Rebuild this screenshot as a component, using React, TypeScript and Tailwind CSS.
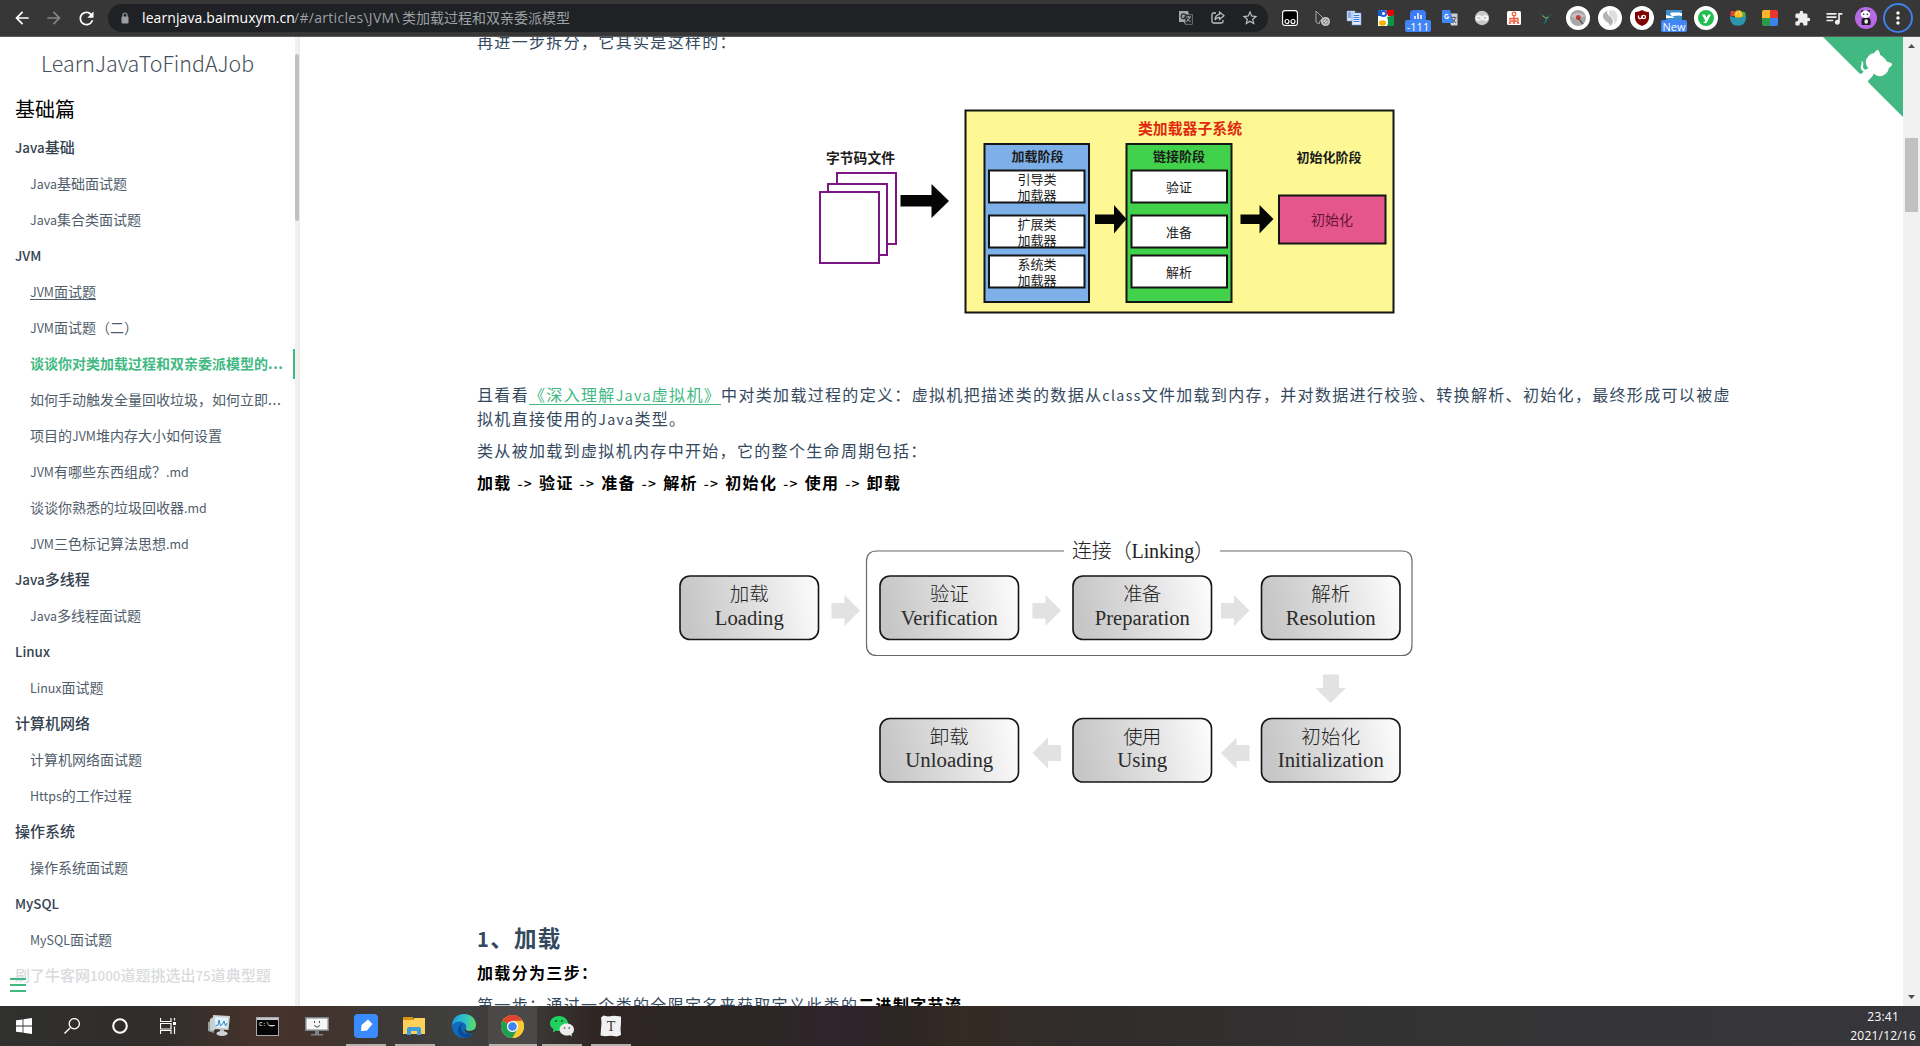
import React from "react";
import { MdArrowBack, MdArrowForward, MdRefresh, MdStarBorder, MdExtension, MdQueueMusic, MdMoreVert } from "react-icons/md";

const CJK = "font-['Noto_Sans_CJK_SC',sans-serif]";

/** Splits a string so that Latin runs are set a little smaller than the Chinese ones. */
function T({ children }: { children: string }) {
  const parts = children.split(/([A-Za-z0-9.:>\-]+)/);
  return (
    <>
      {parts.map((p, i) =>
        i % 2 ? (
          <span key={i} className={p === "..." ? "leading-none tracking-[0.6px]" : "text-[0.89em] leading-none"}>
            {p}
          </span>
        ) : (
          p
        )
      )}
    </>
  );
}

const Slot = ({ children }: { children: React.ReactNode }) => (
  <div className="relative flex h-9 w-8 shrink-0 items-center justify-center">{children}</div>
);

const Svg = ({ s = 16, vb = 16, children }: { s?: number; vb?: number; children: React.ReactNode }) => (
  <svg width={s} height={s} viewBox={`0 0 ${vb} ${vb}`} className="block">
    {children}
  </svg>
);

const Badge = ({ children }: { children: string }) => (
  <span className="absolute left-1/2 top-5 flex h-3 w-[26px] -translate-x-1/2 items-center justify-center rounded-[2px] bg-[#4285f4] font-['Open_Sans',sans-serif] text-[11px] leading-none text-white">
    {children}
  </span>
);

function Toolbar() {
  return (
    <header className="flex h-[37px] items-center border-b border-[#5b5b5b] bg-[#373737]">
      <div className="flex w-[108px] items-center pl-[6px] text-[20px] text-white">
        <Slot>
          <MdArrowBack />
        </Slot>
        <Slot>
          <MdArrowForward className="text-[#868686]" />
        </Slot>
        <Slot>
          <MdRefresh className="text-[21px]" />
        </Slot>
      </div>
      <div className="flex h-7 w-[1160px] items-center rounded-full bg-[#202124] pl-[12px]">
        <svg width="8" height="12" viewBox="0 0 8 12" className="mr-[13px] ml-[1px]">
          <rect x="0.5" y="4.5" width="7" height="7" rx="1" fill="#9aa0a6" />
          <path d="M2 5V3a2 2 0 0 1 4 0v2" fill="none" stroke="#9aa0a6" strokeWidth="1.2" />
        </svg>
        <div className="flex items-center whitespace-nowrap font-['Open_Sans','Noto_Sans_CJK_SC',sans-serif] text-[14px] leading-none text-[#9aa0a6]">
          <span className="w-[152px] tracking-[0.1px] text-white">learnjava.baimuxym.cn</span>
          <span className="w-[108px] tracking-[0.3px]">/#/articles\JVM\</span>
          <span>类加载过程和双亲委派模型</span>
        </div>
        <div className="ml-auto flex pr-[2px] text-[#bdc1c6]">
          <Slot>
            <Svg>
              <path d="M1 1h9l1 3h3.5v10.500H7L6 12H1z" fill="#a5a7a9" />
              <path d="M7 4.500h7v9.500H7.500" fill="#2a2b2e" />
              <path d="M8 7h5M10.500 6v1M12 7q-1 3-3.500 4.500M9 8.500q1 2 3.500 3" stroke="#a5a7a9" fill="none" />
              <path d="M7.300 4.800A2.400 2.400 0 1 0 7.800 7H5.500" stroke="#25262a" fill="none" strokeWidth="1.200" />
            </Svg>
          </Slot>
          <Slot>
            <Svg>
              <path d="M6 3H3.500Q2 3 2 4.500v7Q2 13 3.500 13h8Q13 13 13 11.500V10" fill="none" stroke="#bdc1c6" strokeWidth="1.300" />
              <path d="M9.500 2l4.500 3.800L9.500 9.500V7.300Q6.500 7.300 5 10q.3-5 4.500-5.600z" fill="none" stroke="#bdc1c6" strokeWidth="1.200" />
            </Svg>
          </Slot>
          <Slot>
            <MdStarBorder className="text-[18px]" />
          </Slot>
        </div>
      </div>
      <div className="ml-[6px] flex">
        <Slot>
          <Svg>
            <rect x="0.6" y="0.6" width="14.800" height="14.800" rx="2.500" fill="#000" stroke="#fff" strokeWidth="1.100" />
            <circle cx="5" cy="11.500" r="2" fill="none" stroke="#fff" strokeWidth="1.200" />
            <circle cx="11" cy="11.500" r="2" fill="none" stroke="#fff" strokeWidth="1.200" />
          </Svg>
        </Slot>
        <Slot>
          <Svg>
            <path d="M2 1l9 9H6.500L5 14 2 12z" fill="none" stroke="#aaa" />
            <circle cx="11.500" cy="11.500" r="4.500" fill="#c9c9c9" />
            <circle cx="11.500" cy="11.500" r="2.500" fill="none" stroke="#888" />
            <path d="M10 13l3-3" stroke="#888" />
          </Svg>
        </Slot>
        <Slot>
          <Svg>
            <path d="M1 1h8v10H1z" fill="#d7e4fb" stroke="#7ea6e8" strokeWidth=".5" />
            <path d="M6 3h9v12H6z" fill="#e4edfd" stroke="#6f98e0" strokeWidth=".6" />
            <path d="M2 3h3M2 5h3M2 7h3M7.500 5.500h6M7.500 7.500h6M7.500 9.500h6M7.500 11.500h6" stroke="#3f7be0" />
          </Svg>
        </Slot>
        <Slot>
          <Svg>
            <rect width="16" height="16" fill="#fff" />
            <path d="M0 0h3v6H0z" fill="#1c5ed6" />
            <path d="M8 0h8v6H10z" fill="#ee0000" />
            <path d="M9 7l7-2v11H9q2-4 0-9z" fill="#0b9444" />
            <circle cx="5.500" cy="3.500" r="2.600" fill="#fff" stroke="#1c5ed6" strokeWidth="2" />
            <ellipse cx="4.500" cy="13" rx="3.600" ry="2.700" fill="#f4b400" />
          </Svg>
        </Slot>
        <Slot>
          <Svg>
            <rect width="16" height="16" rx="4" fill="#3d7bfd" />
            <path d="M5 9V6M8 9V3M11 9V5" stroke="#fff" strokeWidth="1.500" />
          </Svg>
          <Badge>-111</Badge>
        </Slot>
        <Slot>
          <Svg>
            <path d="M6 3.500h9.500V15.500H9z" fill="#cfcfcf" />
            <path d="M0 0h8l4 13H0z" fill="#4285f4" />
            <path d="M6.300 5A2 2 0 1 0 6.800 7H5" fill="none" stroke="#fff" strokeWidth="1.100" />
            <path d="M9.500 7.500h5M12 6.500v1M13.500 7.500q-.5 3-3 5M10.500 9l3.500 4" fill="none" stroke="#5f6368" />
          </Svg>
        </Slot>
        <Slot>
          <Svg>
            <circle cx="8" cy="8" r="7.200" fill="#c8c8c8" />
            <path d="M8 8Q6 5.500 4.500 6a2 2 0 0 0 0 4Q6 10.500 8 8t3.500-2a2 2 0 0 1 0 4Q10 10.500 8 8" fill="none" stroke="#fff" strokeWidth="1.300" />
          </Svg>
        </Slot>
        <Slot>
          <Svg>
            <rect x="1" y="1" width="14" height="14" rx="1.500" fill="#fff" />
            <circle cx="8" cy="4" r="1.800" fill="none" stroke="#f15a3a" strokeWidth="1.200" />
            <path d="M8 5.500V13M4 13V8.500h8V13M2.800 13h2.400M6.800 13h2.400M10.800 13h2.400M5 11h6" stroke="#f15a3a" strokeWidth="1.300" fill="none" />
          </Svg>
        </Slot>
        <Slot>
          <Svg>
            <path d="M1.500 3.500q4 .5 6.500 4.500L14 4q-3 3-4.800 5.500-.7 3.500-4.200 5 2.500-2.500 2.300-5.500Q5.500 5.500 1.500 3.500z" fill="#17777c" />
            <path d="M4.500 6q2 .5 3.300 2.300L10 7" stroke="#a2a838" fill="none" />
          </Svg>
        </Slot>
        <Slot>
          <Svg s={24} vb={24}>
            <circle cx="12" cy="12" r="12" fill="#fff" />
            <circle cx="12" cy="12" r="8" fill="#a7a7a7" />
            <path d="M4.500 10q8-6 15 0l-7 2 5 5" fill="#c2c2c2" />
            <circle cx="12.300" cy="11.500" r="2.500" fill="#cb3d3d" />
            <path d="M12 12l5 6" stroke="#555" strokeWidth="1.300" />
          </Svg>
        </Slot>
        <Slot>
          <Svg s={24} vb={24}>
            <circle cx="12" cy="12" r="12" fill="#fff" />
            <path d="M9.500 4.500Q3 7.500 5.500 12.500q1.500 2.500 5 4.500 2 1.500 1 3 4-2 3.300-5.500-.5-2.500-3.300-4.500-3.500-2.500-2-5.500z" fill="#b3b3b3" />
            <path d="M11 5q1.500-1.500 5-.5 3.500 2 3.500 7-.5 5-4 7.500 1.500-4.500-1.500-7.500Q10 8.500 11 5z" fill="#dedede" />
          </Svg>
        </Slot>
        <Slot>
          <Svg s={24} vb={24}>
            <circle cx="12" cy="12" r="12" fill="#fff" />
            <path d="M12 4q3 2 7 2.300V12q0 5-7 8-7-3-7-8V6.300Q9 6 12 4z" fill="#800000" />
            <path d="M8.500 9.500V11a1.700 1.700 0 0 0 3.400 0V9.500" fill="none" stroke="#fff" strokeWidth="1.300" />
            <circle cx="13.800" cy="11" r="1.700" fill="none" stroke="#fff" strokeWidth="1.300" />
          </Svg>
        </Slot>
        <Slot>
          <Svg>
            <rect width="16" height="16" fill="#fff" />
            <path d="M0 0h16v3H9Q7 4 9 5l7 1v5H0V8h7q2-.5 0-1.500L0 5z" fill="#3d8fd0" />
            <path d="M5 2.500h9v1.300H9q-1 .7 0 1.200l4 1H6Q3 4 5 2.500z" fill="#fff" />
          </Svg>
          <Badge>New</Badge>
        </Slot>
        <Slot>
          <Svg s={24} vb={24}>
            <circle cx="12" cy="12" r="12" fill="#fff" />
            <circle cx="12" cy="12" r="8" fill="#20bf4f" />
            <path d="M8 8.500h3l1.500 3 2-3H17L12.500 17q-2 .5-3.500-.5 2-.5 2.200-2z" fill="#fff" />
          </Svg>
        </Slot>
        <Slot>
          <Svg>
            <path d="M.5 1h4v5h-4z" fill="#e2453c" />
            <path d="M12 1.500l3.500 1V7H12z" fill="#3fb34f" />
            <circle cx="8.500" cy="4.500" r="4.300" fill="#fbbc1a" />
            <path d="M6 3h1M9 2h1M10 5h1" stroke="#fff" />
            <path d="M0 6q8 3 16 0 .5 9.500-8 9.800Q-.5 15.500 0 6z" fill="#2d95ab" />
          </Svg>
        </Slot>
        <Slot>
          <Svg>
            <path d="M2 0h6v8H0V2q0-2 2-2z" fill="#fbb32b" />
            <path d="M8 0h6q2 0 2 2v6H8z" fill="#e9362f" />
            <path d="M0 8h8v8H2q-2 0-2-2z" fill="#2c9a48" />
            <path d="M8 8h8v6q0 2-2 2H8z" fill="#3f81f0" />
          </Svg>
        </Slot>
        <Slot>
          <MdExtension className="text-[17px] text-[#eeeeee]" />
        </Slot>
        <Slot>
          <MdQueueMusic className="text-[20px] text-[#eeeeee]" />
        </Slot>
        <Slot>
          <Svg s={22} vb={22}>
            <circle cx="11" cy="11" r="11" fill="#b66ae6" />
            <circle cx="7.300" cy="4.300" r="1.400" fill="#222" />
            <circle cx="13.500" cy="4.300" r="1.400" fill="#222" />
            <path d="M7 11.500q4-2 8 0 1.300 3 .3 6.500H7q-1.300-3.500 0-6.500z" fill="#1d1d1d" />
            <ellipse cx="10.500" cy="7.300" rx="4.600" ry="3.700" fill="#fff" />
            <circle cx="8.700" cy="7.300" r=".8" fill="#222" />
            <circle cx="12.300" cy="7.300" r=".8" fill="#222" />
            <ellipse cx="11.200" cy="14.500" rx="1.800" ry="2.200" fill="#eee" />
          </Svg>
        </Slot>
        <Slot>
          <span className="flex h-[30px] w-[30px] shrink-0 items-center justify-center rounded-full border-2 border-[#3f7fe8] text-[20px] text-white">
            <MdMoreVert />
          </span>
        </Slot>
      </div>
    </header>
  );
}

type Row = { text: string; kind?: "group" | "active" | "underline" | "faded" };

const ROWS: Row[] = [
  { text: "Java基础", kind: "group" },
  { text: "Java基础面试题" },
  { text: "Java集合类面试题" },
  { text: "JVM", kind: "group" },
  { text: "JVM面试题", kind: "underline" },
  { text: "JVM面试题（二）" },
  { text: "谈谈你对类加载过程和双亲委派模型的...", kind: "active" },
  { text: "如何手动触发全量回收垃圾，如何立即..." },
  { text: "项目的JVM堆内存大小如何设置" },
  { text: "JVM有哪些东西组成？.md" },
  { text: "谈谈你熟悉的垃圾回收器.md" },
  { text: "JVM三色标记算法思想.md" },
  { text: "Java多线程", kind: "group" },
  { text: "Java多线程面试题" },
  { text: "Linux", kind: "group" },
  { text: "Linux面试题" },
  { text: "计算机网络", kind: "group" },
  { text: "计算机网络面试题" },
  { text: "Https的工作过程" },
  { text: "操作系统", kind: "group" },
  { text: "操作系统面试题" },
  { text: "MySQL", kind: "group" },
  { text: "MySQL面试题" },
  { text: "刷了牛客网1000道题挑选出75道典型题", kind: "faded" },
];

function rowClass(kind?: Row["kind"]) {
  switch (kind) {
    case "group":
      return "pl-[15px] text-[15px] font-medium text-[#34424f]";
    case "faded":
      return "pl-[15px] text-[15px] font-medium text-[#d9dbdd]";
    case "active":
      return "pl-[30px] text-[14px] font-bold text-[#42b983]";
    case "underline":
      return "pl-[30px] text-[14px] text-[#505d6b] underline underline-offset-2";
    default:
      return "pl-[30px] text-[14px] text-[#505d6b]";
  }
}

function Sidebar() {
  return (
    <aside className="relative flex w-[300px] shrink-0 border-r border-[#e9e9e9]">
      <div className="w-[295px] overflow-hidden">
        <h1 className="mt-[7px] h-9 text-center text-[24px] font-light leading-9 text-[#46505a]">
          <T>LearnJavaToFindAJob</T>
        </h1>
        <h2 className="mt-[11px] h-9 pl-[15px] text-[20px] leading-9 text-black">基础篇</h2>
        <ul className="mt-[2px]">
          {ROWS.map((r) => (
            <li key={r.text} className="flex h-9 items-center justify-between">
              <span className={`whitespace-nowrap leading-6 ${rowClass(r.kind)}`}>
                <T>{r.text}</T>
              </span>
              {r.kind === "active" && <span className="mt-[2px] h-[30px] w-[2px] bg-[#42b983]" />}
            </li>
          ))}
        </ul>
      </div>
      <div className="w-1 bg-[#f1f1f1] pt-[17px]">
        <div className="h-[167px] rounded-sm bg-[#c1c1c1]" />
      </div>
      <div className="absolute bottom-[14px] left-[10px] flex w-4 flex-col gap-1">
        <span className="h-[2px] bg-[#42b983]" />
        <span className="h-[2px] bg-[#42b983]" />
        <span className="h-[2px] bg-[#42b983]" />
      </div>
    </aside>
  );
}

function Box({ x, y, w, h, fill, stroke = "#151515" }: { x: number; y: number; w: number; h: number; fill: string; stroke?: string }) {
  return <rect x={x} y={y} width={w} height={h} fill={fill} stroke={stroke} strokeWidth="2" />;
}

function Label({ x, y, w, size, children, fill = "#1c1c1c", weight = 400 }: { x: number; y: number; w: number; size: number; children: string; fill?: string; weight?: number }) {
  return (
    <text x={x} y={y + size * 0.37 - 1} textAnchor="middle" textLength={w} lengthAdjust="spacingAndGlyphs" fontSize={size} fontWeight={weight} fill={fill}>
      {children}
    </text>
  );
}

/** Class loader subsystem: loading, linking and initialization phases. */
function LoaderDiagram() {
  const ys = [80.5, 125.5, 165.5];
  const loaders = ["引导类", "扩展类", "系统类"];
  const links = ["验证", "准备", "解析"];
  return (
    <svg width="620" height="240" viewBox="0 0 620 240" className="block tracking-normal">
      <Box x={37} y={83} w={59} h={71} fill="#fff" stroke="#7d1685" />
      <Box x={28} y={94} w={59} h={71} fill="#fff" stroke="#7d1685" />
      <Box x={20} y={102} w={59} h={71} fill="#fff" stroke="#7d1685" />
      <Label x={60.500} y={68.500} w={69} size={14} weight={700}>字节码文件</Label>
      <path d="M100.500 105h31V94l17.500 17-17.500 17v-11.500h-31z" fill="#050505" />
      <Box x={165.500} y={20.500} w={428} h={202} fill="#fdf893" />
      <Label x={390} y={39} w={104} size={15} fill="#e02a10" weight={700}>类加载器子系统</Label>
      <Box x={184.500} y={54} w={104.500} h={158} fill="#7db0e8" />
      <Box x={326.500} y={54} w={105} h={158} fill="#42d14a" />
      <Label x={237.500} y={67} w={52} size={13} weight={700}>加载阶段</Label>
      <Label x={379} y={67} w={52} size={13} weight={700}>链接阶段</Label>
      <Label x={529} y={68.500} w={65} size={13} weight={700}>初始化阶段</Label>
      {ys.map((y, i) => (
        <g key={y}>
          <Box x={189} y={y} w={95.500} h={32} fill="#fff" />
          <Box x={331.500} y={y} w={95.500} h={32} fill="#fff" />
          <Label x={237} y={y + 9.500} w={39} size={13}>{loaders[i]}</Label>
          <Label x={237} y={y + 26} w={39} size={13}>加载器</Label>
          <Label x={379} y={y + 17.500} w={26} size={13}>{links[i]}</Label>
        </g>
      ))}
      <path d="M295 124.500h19v-9.500l12.500 14-12.500 14.500V134h-19z" fill="#050505" />
      <path d="M440.500 124.500h19v-9.500l14 14-14 14.500V134h-19z" fill="#050505" />
      <Box x={479} y={105.500} w={106.500} h={48} fill="#e5568c" />
      <Label x={532} y={130.500} w={42} size={14} fill="#6b1238">初始化</Label>
    </svg>
  );
}

type Stage = { x: number; y: number; zh: string; zw: number; en: string; ew: number };

const STAGES: Stage[] = [
  { x: 20, y: 56, zh: "加载", zw: 39, en: "Loading", ew: 69 },
  { x: 220, y: 56, zh: "验证", zw: 39, en: "Verification", ew: 97 },
  { x: 413, y: 56, zh: "准备", zw: 38, en: "Preparation", ew: 95 },
  { x: 601.5, y: 56, zh: "解析", zw: 39, en: "Resolution", ew: 90 },
  { x: 220, y: 198.5, zh: "卸载", zw: 39, en: "Unloading", ew: 88 },
  { x: 413, y: 198.5, zh: "使用", zw: 38, en: "Using", ew: 50 },
  { x: 601.5, y: 198.5, zh: "初始化", zw: 59, en: "Initialization", ew: 106 },
];

/** Class life cycle, from loading to unloading. */
function LifecycleDiagram() {
  return (
    <svg width="780" height="290" viewBox="0 0 780 290" className="block tracking-normal">
      <defs>
        <linearGradient id="stage" x1="0" y1="0.1" x2="1" y2="0">
          <stop offset="0" stopColor="#c6c6c6" />
          <stop offset="0.5" stopColor="#e0e0e0" />
          <stop offset="1" stopColor="#fefefe" />
        </linearGradient>
      </defs>
      <path d="M404 31H217q-10.500 0-10.500 10.500v83.500q0 10.500 10.500 10.500h525q10 0 10-10.500V41.500Q752 31 742 31H560" fill="none" stroke="#6a6a6a" strokeWidth="1.200" />
      <text x="412" y="37.500" fontSize="20" textLength="142" fill="#222" className="font-['Liberation_Serif','Noto_Sans_CJK_SC',serif] font-light">
        连接（Linking）
      </text>
      {STAGES.map((s) => (
        <g key={s.en}>
          <rect x={s.x} y={s.y} width="138.500" height="63.500" rx="10" fill="url(#stage)" stroke="#161616" strokeWidth="1.600" />
          <text x={s.x + 69.25} y={s.y + 25} fontSize="19.500" textAnchor="middle" textLength={s.zw} fill="#222" className="font-['Noto_Sans_CJK_SC',serif] font-light">
            {s.zh}
          </text>
          <text x={s.x + 69.25} y={s.y + 48.500} fontSize="20" textAnchor="middle" textLength={s.ew} lengthAdjust="spacingAndGlyphs" fill="#2b2b2b" className="font-['Liberation_Serif',serif]">
            {s.en}
          </text>
        </g>
      ))}
      <g fill="#e2e2e2">
        <path d="M171.500 83h13v-8L200 90.500 184.500 106v-7.500h-13z" />
        <path d="M372.500 83h13v-8L401 90.500 385.500 106v-7.500h-13z" />
        <path d="M561 83h13v-8l15.500 15.500L574 106v-7.500h-13z" />
        <path d="M663 154.500h16V168h7L670.500 183 655.500 168h7.500z" />
        <path d="M401 225h-13v-7.500L372.500 233l15.500 15.500V241h13z" />
        <path d="M589.500 225h-13v-7.500L561 233l15.500 15.500V241h13z" />
      </g>
    </svg>
  );
}

function Article() {
  return (
    <main className="relative flex-1 overflow-hidden pl-[177px] text-[16px] leading-6 tracking-[1.33px] text-[#34495e]">
      <p className="-mt-2 h-6">再进一步拆分，它其实是这样的：</p>
      <div className="-mr-40 mt-[37px] ml-[323px]">
        <LoaderDiagram />
      </div>
      <p className="mt-[52px] w-[1270px] whitespace-nowrap">
        且看看
        <a className="text-[#42b983] underline underline-offset-[3px]">
          <T>《深入理解Java虚拟机》</T>
        </a>
        <T>中对类加载过程的定义：虚拟机把描述类的数据从class文件加载到内存，并对数据进行校验、转换解析、初始化，最终形成可以被虚</T>
        <br />
        <T>拟机直接使用的Java类型。</T>
      </p>
      <p className="mt-2">类从被加载到虚拟机内存中开始，它的整个生命周期包括：</p>
      <p className="mt-2 font-bold text-black">
        {["加载", "验证", "准备", "解析", "初始化", "使用", "卸载"].map((s, i) => (
          <React.Fragment key={s}>
            {i > 0 && <span className="inline-block w-[27.400px] text-center text-[14px] font-medium leading-none">-&gt;</span>}
            {s}
          </React.Fragment>
        ))}
      </p>
      <div className="mt-[26px] ml-[183px]">
        <LifecycleDiagram />
      </div>
      <h3 className="mt-[109px] h-9 text-[22.500px] font-bold leading-9">
        <T>1、加载</T>
      </h3>
      <p className="mt-[5px] font-bold text-black">加载分为三步：</p>
      <p className="mt-2 whitespace-nowrap">
        第一步：通过一个类的全限定名来获取定义此类的<b className="text-black">二进制字节流</b>
      </p>
      <svg width="80" height="80" viewBox="0 0 250 250" className="absolute right-0 top-0 text-white">
        <path d="M0,0 L115,115 L130,115 L142,142 L250,250 L250,0 Z" fill="#42b983" />
        <path
          d="M128.3,109.0 C113.8,99.7 119.0,89.6 119.0,89.6 C122.0,82.7 120.5,78.6 120.5,78.6 C119.2,72.0 123.4,76.3 123.4,76.3 C127.3,80.9 125.5,87.3 125.5,87.3 C122.9,97.6 130.6,101.9 134.4,103.2"
          fill="currentColor"
        />
        <path
          d="M115.0,115.0 C114.9,115.1 118.7,116.5 119.8,115.4 L133.7,101.6 C136.9,99.2 139.9,98.4 142.2,98.6 C133.8,88.0 127.5,74.4 143.8,58.0 C148.5,53.4 154.0,51.2 159.7,51.0 C160.3,49.4 163.2,43.6 171.4,40.1 C171.4,40.1 176.1,42.5 178.8,56.2 C183.1,58.6 187.2,61.8 190.9,65.4 C194.5,69.0 197.7,73.2 200.1,77.6 C213.8,80.2 216.3,84.9 216.3,84.9 C212.7,93.1 206.9,96.0 205.4,96.6 C205.1,102.4 203.0,107.8 198.3,112.5 C181.9,128.9 168.3,122.5 157.7,114.1 C157.9,116.9 156.7,120.9 152.7,124.9 L141.0,136.5 C139.8,137.7 141.6,141.9 141.8,141.8 Z"
          fill="currentColor"
        />
      </svg>
    </main>
  );
}

function PageScrollbar() {
  return (
    <div className="flex w-[17px] shrink-0 flex-col items-center bg-[#f1f1f1]">
      <svg width="7" height="4" viewBox="0 0 7 4" className="mt-[7px]">
        <path d="M0 4L3.500 0 7 4z" fill="#505050" />
      </svg>
      <div className="mt-[90px] h-[74px] w-[13px] bg-[#c1c1c1]" />
      <svg width="7" height="4" viewBox="0 0 7 4" className="mt-auto mb-[7px]">
        <path d="M0 0L3.500 4 7 0z" fill="#505050" />
      </svg>
    </div>
  );
}

function Task({ children, open, focus }: { children: React.ReactNode; open?: boolean; focus?: boolean }) {
  return (
    <div className={`relative flex h-10 w-[49px] items-center justify-center ${focus ? "bg-[#4b4948]" : ""}`}>
      {children}
      {open && <span className={`absolute bottom-0 h-[2px] bg-[#b5aeab] ${focus ? "w-[48px]" : "w-10"}`} />}
    </div>
  );
}

function Taskbar() {
  return (
    <footer className="flex h-10 shrink-0 items-center bg-[linear-gradient(90deg,#30302e_0%,#302d2b_8%,#46332b_13.5%,#42332d_17%,#3d3a38_20%,#40403e_24%,#3a3736_28%,#2f2624_31%,#2c2625_40%,#30242c_44%,#2c2523_46.500%,#352a24_50%,#302c2b_56%,#343334_75%,#37363b_100%)]">
      <div className="flex h-10 w-12 items-center justify-center">
        <Svg>
          <path d="M0 2.300L6.600 1.400v6.200H0zM7.400 1.300L16 0v7.600H7.400zM0 8.400h6.600v6.200L0 13.700zM7.400 8.400H16V16l-8.600-1.200z" fill="#fff" />
        </Svg>
      </div>
      <div className="flex h-10 w-12 items-center justify-center">
        <Svg>
          <path d="M0.500 15.500L6 10" stroke="#fff" strokeWidth="1.400" />
          <circle cx="10.300" cy="5.700" r="5.100" fill="none" stroke="#fff" strokeWidth="1.300" />
        </Svg>
      </div>
      <div className="flex h-10 w-12 items-center justify-center">
        <Svg>
          <circle cx="8" cy="8" r="6.800" fill="none" stroke="#fff" strokeWidth="2" />
        </Svg>
      </div>
      <div className="flex h-10 w-12 items-center justify-center">
        <Svg>
          <path d="M.5 0v3.500H11V0M.5 16v-3.500H11V16M.5 5.500H11v5.500H.5zM14.500 0v2.500M14.500 8.500V16" fill="none" stroke="#fff" strokeWidth="1.200" />
          <path d="M13 4h3v3h-3z" fill="#fff" />
        </Svg>
      </div>
      <div className="ml-[2px] flex">
        <Task>
          <Svg s={24} vb={24}>
            <path d="M1 8l6-2v13l-6-2z" fill="#8fa39a" />
            <path d="M3 5l5-3v14l-5 1z" fill="#c9cdcf" />
            <path d="M6 1l17 1-1.500 14L6.500 15z" fill="#cdd3d6" />
            <path d="M8 3l13 .8-1 10.200-11.500-.8z" fill="#e4f2fb" />
            <path d="M8.500 12l2.500-1 1-5 1.500 6 2-2 1.500-3 1.500 5 1.500-3" fill="none" stroke="#2a86c4" strokeWidth="1" />
            <path d="M13 15h4v4h-4z" fill="#b7bbbc" />
            <ellipse cx="15" cy="19.500" rx="5.500" ry="2.500" fill="#cfd3d4" />
          </Svg>
        </Task>
        <Task>
          <svg width="23" height="19" viewBox="0 0 23 19">
            <rect x=".5" y=".5" width="22" height="18" fill="#050505" stroke="#a9a9a9" />
            <path d="M1 1h21v2H1z" fill="#c4c8cc" />
            <text x="3" y="9" fontSize="6" fill="#fff" fontFamily="Liberation Mono, monospace">C:\_</text>
            <path d="M13 8.500h6" stroke="#ccc" />
          </svg>
        </Task>
        <Task>
          <svg width="24" height="20" viewBox="0 0 24 20">
            <path d="M0 1h24v14H0z" fill="#7d8385" />
            <path d="M1.500 2.500h21v11h-21z" fill="#f6f6f6" />
            <path d="M9.500 5v2M14.500 5v2M9.500 9q0 2 2.500 2t2.500-2" fill="none" stroke="#555" />
            <path d="M10 15h4v3h4v1.500H6V18h4z" fill="#7d8385" />
          </svg>
        </Task>
        <Task open>
          <Svg s={24} vb={24}>
            <rect width="24" height="24" rx="4" fill="#3a8bff" />
            <path d="M7 17l.5-6L14 5.500 18.500 10 13 16.500z" fill="#fff" />
          </Svg>
        </Task>
        <Task open>
          <svg width="23" height="20" viewBox="0 0 23 20">
            <path d="M0 1h10v4H0z" fill="#dd9510" />
            <path d="M0 4h10l1-2h11v16H0z" fill="#fdd05a" />
            <path d="M4 19v-6q0-2 2-2h10q2 0 2 2v6h-4v-4H8v4z" fill="#3f9be0" />
          </svg>
        </Task>
        <Task>
          <Svg s={24} vb={24}>
            <defs>
              <linearGradient id="edge" x1="0" y1="0.3" x2="1" y2="0.4">
                <stop offset="0" stopColor="#1b9de2" />
                <stop offset="0.6" stopColor="#36c5c0" />
                <stop offset="1" stopColor="#5fdc5b" />
              </linearGradient>
            </defs>
            <circle cx="12" cy="12" r="12" fill="#0f6cbd" />
            <path d="M0 11Q1.500 0 12.500 0 23 1 24 10.500q0 6-6.500 6.500-5 0-3.500-3 1-2.500-1-4.500Q6 5 0 11z" fill="url(#edge)" />
            <path d="M9 13q0 8 12 7.500-3 3-7 3.500Q5 22 6 15.500 7 10 12 9.500 9 11 9 13z" fill="#0c4a94" />
            <path d="M14 14q-1 3 3.500 3 3.500 0 6-2.500l.5 2-2.500 3q-7 1.500-9-3.500.3-1.500 1.500-2z" fill="#393735" />
          </Svg>
        </Task>
        <Task open focus>
          <Svg s={23} vb={24}>
            <circle cx="12" cy="12" r="12" fill="#fcc934" />
            <path d="M12 12L1.600 6A12 12 0 0 1 22.400 6z" fill="#e1432f" />
            <path d="M12 12L1.600 6A12 12 0 0 0 12 24l5-9z" fill="#1e9f54" />
            <path d="M12 6h10.400A12 12 0 0 1 12 24l5.200-9z" fill="#fcc934" />
            <circle cx="12" cy="12" r="5.800" fill="#fff" />
            <circle cx="12" cy="12" r="4.500" fill="#3f82f0" />
          </Svg>
        </Task>
        <Task open>
          <Svg s={24} vb={24}>
            <path d="M9 2c5 0 9 3.200 9 7.500S14 17 9 17q-1.500 0-3-.5L3 18.500 3.500 15Q0 13 0 9.500C0 5.200 4 2 9 2z" fill="#1fd15f" />
            <circle cx="6" cy="7" r="1.100" fill="#115c2e" />
            <circle cx="12" cy="7" r="1.100" fill="#115c2e" />
            <path d="M16.800 9.500c4 0 7.200 2.600 7.200 6 0 2-1 3.500-2.500 4.500l.5 2.500-2.500-1.500q-1.200.5-2.700.5c-4 0-7.200-2.600-7.200-6s3.200-6 7.200-6z" fill="#ececec" />
            <circle cx="14.500" cy="14" r=".9" fill="#777" />
            <circle cx="19.200" cy="14" r=".9" fill="#777" />
          </Svg>
        </Task>
        <Task open>
          <svg width="22" height="22" viewBox="0 0 22 22">
            <path d="M1 2.500L3.500.5 8 1.500 14 .8 21 1.500V8l-.5 6 .5 6-4 1.500-6-.8-6 .5-4.500-.7L1 14l.5-6z" fill="#f1f1f1" />
            <text x="11" y="16" fontSize="14" textAnchor="middle" fill="#333" fontFamily="Liberation Serif, serif">T</text>
          </svg>
        </Task>
      </div>
      <div className="ml-auto mr-[4px] flex flex-col items-center font-['Open_Sans',sans-serif] text-[12px] leading-[19px] tracking-[0.2px] text-white">
        <span>23:41</span>
        <span>2021/12/16</span>
      </div>
    </footer>
  );
}

export default function App() {
  return (
    <div className={`flex h-[1046px] w-[1920px] flex-col overflow-hidden bg-white ${CJK}`}>
      <Toolbar />
      <div className="flex h-[969px] shrink-0 overflow-hidden">
        <Sidebar />
        <Article />
        <PageScrollbar />
      </div>
      <Taskbar />
    </div>
  );
}
